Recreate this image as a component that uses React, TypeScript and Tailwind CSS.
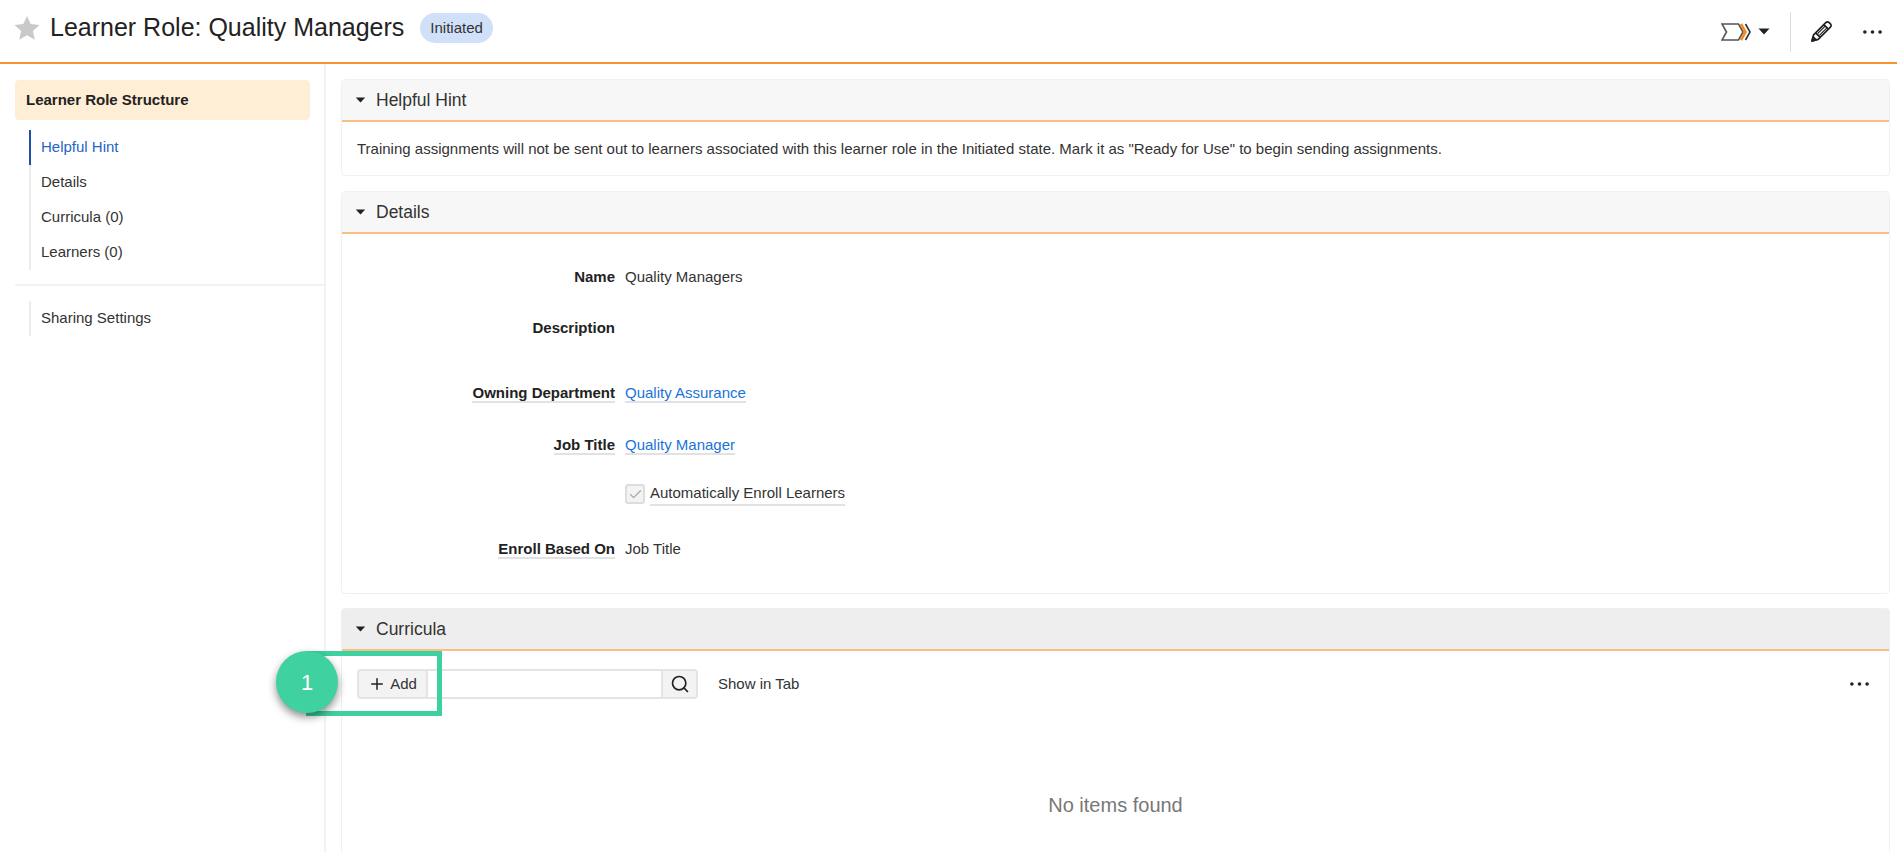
import { Plus, Search, Check } from 'lucide-react';

const FONT = "font-['Liberation_Sans',Arial,sans-serif]";

function Caret({ className }: { className?: string }) {
  return (
    <svg viewBox="0 0 12 7" className={className} fill="currentColor">
      <path d="M0.5 0.5h11L6 6.5z" />
    </svg>
  );
}

function Dots() {
  return (
    <svg viewBox="0 0 20 4" className="w-[19px] h-[4px]" fill="#222">
      <circle cx="2" cy="2" r="1.9" />
      <circle cx="10" cy="2" r="1.9" />
      <circle cx="18" cy="2" r="1.9" />
    </svg>
  );
}

function StateIcon() {
  return (
    <svg viewBox="0 0 30 20" className="w-[30px] h-[20px]" fill="none">
      <path d="M1 2h16.5l4.5 8-4.5 8H1l4.5-8z" stroke="#555" strokeWidth="1.6" fill="#fff" />
      <path d="M20 2l4.5 8-4.5 8" stroke="#f28c1e" strokeWidth="2.6" />
      <path d="M24.5 2l4.5 8-4.5 8" stroke="#333" strokeWidth="1.6" />
    </svg>
  );
}

function PencilIcon() {
  return (
    <svg viewBox="0 0 24 24" className="w-[24px] h-[24px]" fill="none" stroke="#222" strokeWidth="1.7" strokeLinejoin="round">
      <path d="M3 21l1.6-6.2L16.8 2.6a2.4 2.4 0 0 1 3.4 0l1.2 1.2a2.4 2.4 0 0 1 0 3.4L9.2 19.4z" fill="#fff" />
      <path d="M14.8 4.6l4.6 4.6M6.6 12.8l4.6 4.6" />
      <path d="M8.6 13.6l7.8-7.8M10.4 15.4l7.8-7.8" strokeWidth="1.2" />
      <path d="M3 21l1.1-4.2 3.1 3.1z" fill="#222" />
    </svg>
  );
}

function SectionHeader({ title, dark }: { title: string; dark?: boolean }) {
  return (
    <div className={`flex items-center h-[42px] pl-[13px] border-b-2 border-[#fbbf85] ${dark ? 'bg-[#eeeeee]' : 'bg-[#f7f7f7]'}`}>
      <Caret className="w-[11px] h-[6px] text-[#222]" />
      <span className="ml-[10px] text-[17.5px] text-[#333]">{title}</span>
    </div>
  );
}

function FieldRow({ label, mt, underline, children }: { label: string; mt: string; underline?: boolean; children?: React.ReactNode }) {
  return (
    <div className={`flex items-baseline h-[20px] ${mt}`}>
      <div className="w-[273px] text-right shrink-0">
        <span className={`text-[15px] font-bold text-[#222] ${underline ? 'border-b-2 border-[#e2e2e2]' : ''}`}>{label}</span>
      </div>
      <div className="ml-[10px] text-[15px] text-[#333]">{children}</div>
    </div>
  );
}

function LinkValue({ children }: { children: React.ReactNode }) {
  return <span className="text-[#1a73d8] border-b-2 border-[#e2e2e2]">{children}</span>;
}

function NavItem({ label, active }: { label: string; active?: boolean }) {
  return (
    <div className={`h-[35px] flex items-center pl-[10px] border-l-2 text-[15px] ${active ? 'border-[#1d4fa8] text-[#2563c9]' : 'border-[#ececec] text-[#333]'}`}>
      {label}
    </div>
  );
}

export default function App() {
  return (
    <div className={`relative w-[1897px] h-[852px] overflow-hidden bg-white ${FONT}`}>
      {/* header */}
      <header className="flex items-center h-[64px] border-b-2 border-[#f7932e] pl-[14px] pr-[15px]">
        <svg viewBox="0 0 24 24" className="w-[26px] h-[26px] -mt-[6px]" fill="#c9c9c9">
          <path d="M12 1l3.4 7.4 8.1.9-6 5.5 1.7 8L12 18.8 4.8 22.8l1.7-8-6-5.5 8.1-.9z" />
        </svg>
        <h1 className="ml-[10px] -mt-[6px] text-[25px] text-[#222]">Learner Role: Quality Managers</h1>
        <span className="ml-[16px] -mt-[6px] h-[30px] px-[10px] flex items-center rounded-full bg-[#cfe0f8] text-[15px] text-[#333]">Initiated</span>
        <div className="ml-auto flex items-center mt-px">
          <StateIcon />
          <Caret className="ml-[7px] w-[12px] h-[7px] text-[#222]" />
          <div className="ml-[20px] w-px h-[40px] bg-[#dddddd]" />
          <div className="ml-[18px]"><PencilIcon /></div>
          <div className="ml-[30px]"><Dots /></div>
        </div>
      </header>

      <div className="flex h-[788px]">
        {/* sidebar */}
        <aside className="w-[326px] shrink-0 border-r-2 border-[#f2f2f2] pt-[16px]">
          <div className="ml-[15px] w-[295px] h-[40px] flex items-center pl-[11px] pt-px rounded-sm bg-[#ffeed6] text-[15px] font-bold text-[#222]">
            Learner Role Structure
          </div>
          <nav className="ml-[29px] mt-[10px]">
            <NavItem label="Helpful Hint" active />
            <NavItem label="Details" />
            <NavItem label="Curricula (0)" />
            <NavItem label="Learners (0)" />
          </nav>
          <div className="ml-[15px] mt-[14px] border-t-2 border-[#f2f2f2]" />
          <div className="ml-[29px] mt-[15px]">
            <NavItem label="Sharing Settings" />
          </div>
        </aside>

        {/* main */}
        <main className="flex-1 pl-[15px] pr-[7px] pt-[15px]">
          <section className="border border-[#f0f0f0] rounded-sm">
            <SectionHeader title="Helpful Hint" />
            <div className="h-[53px] pl-[15px] pt-[16px] text-[15px] text-[#333]">
              Training assignments will not be sent out to learners associated with this learner role in the Initiated state. Mark it as "Ready for Use" to begin sending assignments.
            </div>
          </section>

          <section className="mt-[15px] h-[403px] border border-[#f0f0f0] rounded-sm">
            <SectionHeader title="Details" />
            <div className="flex flex-col">
              <FieldRow label="Name" mt="mt-[31px]">Quality Managers</FieldRow>
              <FieldRow label="Description" mt="mt-[31px]" />
              <FieldRow label="Owning Department" mt="mt-[45px]" underline><LinkValue>Quality Assurance</LinkValue></FieldRow>
              <FieldRow label="Job Title" mt="mt-[32px]" underline><LinkValue>Quality Manager</LinkValue></FieldRow>
              <div className="flex items-center h-[20px] mt-[31px] ml-[283px]">
                <span className="w-[20px] h-[20px] flex items-center justify-center rounded-[3px] border-2 border-[#dddddd] bg-[#f3f3f3]">
                  <Check className="w-[15px] h-[15px] text-[#aaaaaa]" strokeWidth={2} />
                </span>
                <span className="ml-[5px] text-[15px] text-[#333] border-b-2 border-[#e2e2e2]">Automatically Enroll Learners</span>
              </div>
              <FieldRow label="Enroll Based On" mt="mt-[33px]" underline>Job Title</FieldRow>
            </div>
          </section>

          <section className="mt-[14px] h-[310px] border border-[#f0f0f0] rounded-sm">
            <SectionHeader title="Curricula" dark />
            <div className="flex items-center h-[30px] mt-[18px] pl-[15px] pr-[20px]">
              <button className="relative z-10 flex items-center justify-center w-[71px] h-[30px] rounded-[4px] border-2 border-[#e4e4e4] bg-[#f3f3f3] text-[15px] text-[#333]">
                <Plus className="w-[18px] h-[18px] mr-[4px] text-[#222]" strokeWidth={2} />
                Add
              </button>
              <div className="-ml-[2px] w-[237px] h-[30px] border-2 border-[#e4e4e4] bg-white" />
              <div className="-ml-[2px] w-[37px] h-[30px] flex items-center justify-center rounded-r-[4px] border-2 border-[#e4e4e4] bg-[#f3f3f3]">
                <Search className="w-[20px] h-[20px] text-[#222]" strokeWidth={2} />
              </div>
              <span className="ml-[20px] text-[15px] text-[#333]">Show in Tab</span>
              <div className="ml-auto"><Dots /></div>
            </div>
            <div className="mt-[91px] text-center text-[20px] text-[#777]">No items found</div>
          </section>
        </main>
      </div>

      {/* annotation over the Add button */}
      <div className="absolute left-[306px] top-[651px] w-[136px] h-[65px] border-[5px] border-[#3dd1a0]" />
      <div className="absolute left-[276px] top-[651px] w-[62px] h-[62px] rounded-full bg-[#3fd1a0] shadow-[0_4px_8px_rgba(0,0,0,0.45)] flex items-center justify-center text-[22px] text-white">
        1
      </div>
    </div>
  );
}
